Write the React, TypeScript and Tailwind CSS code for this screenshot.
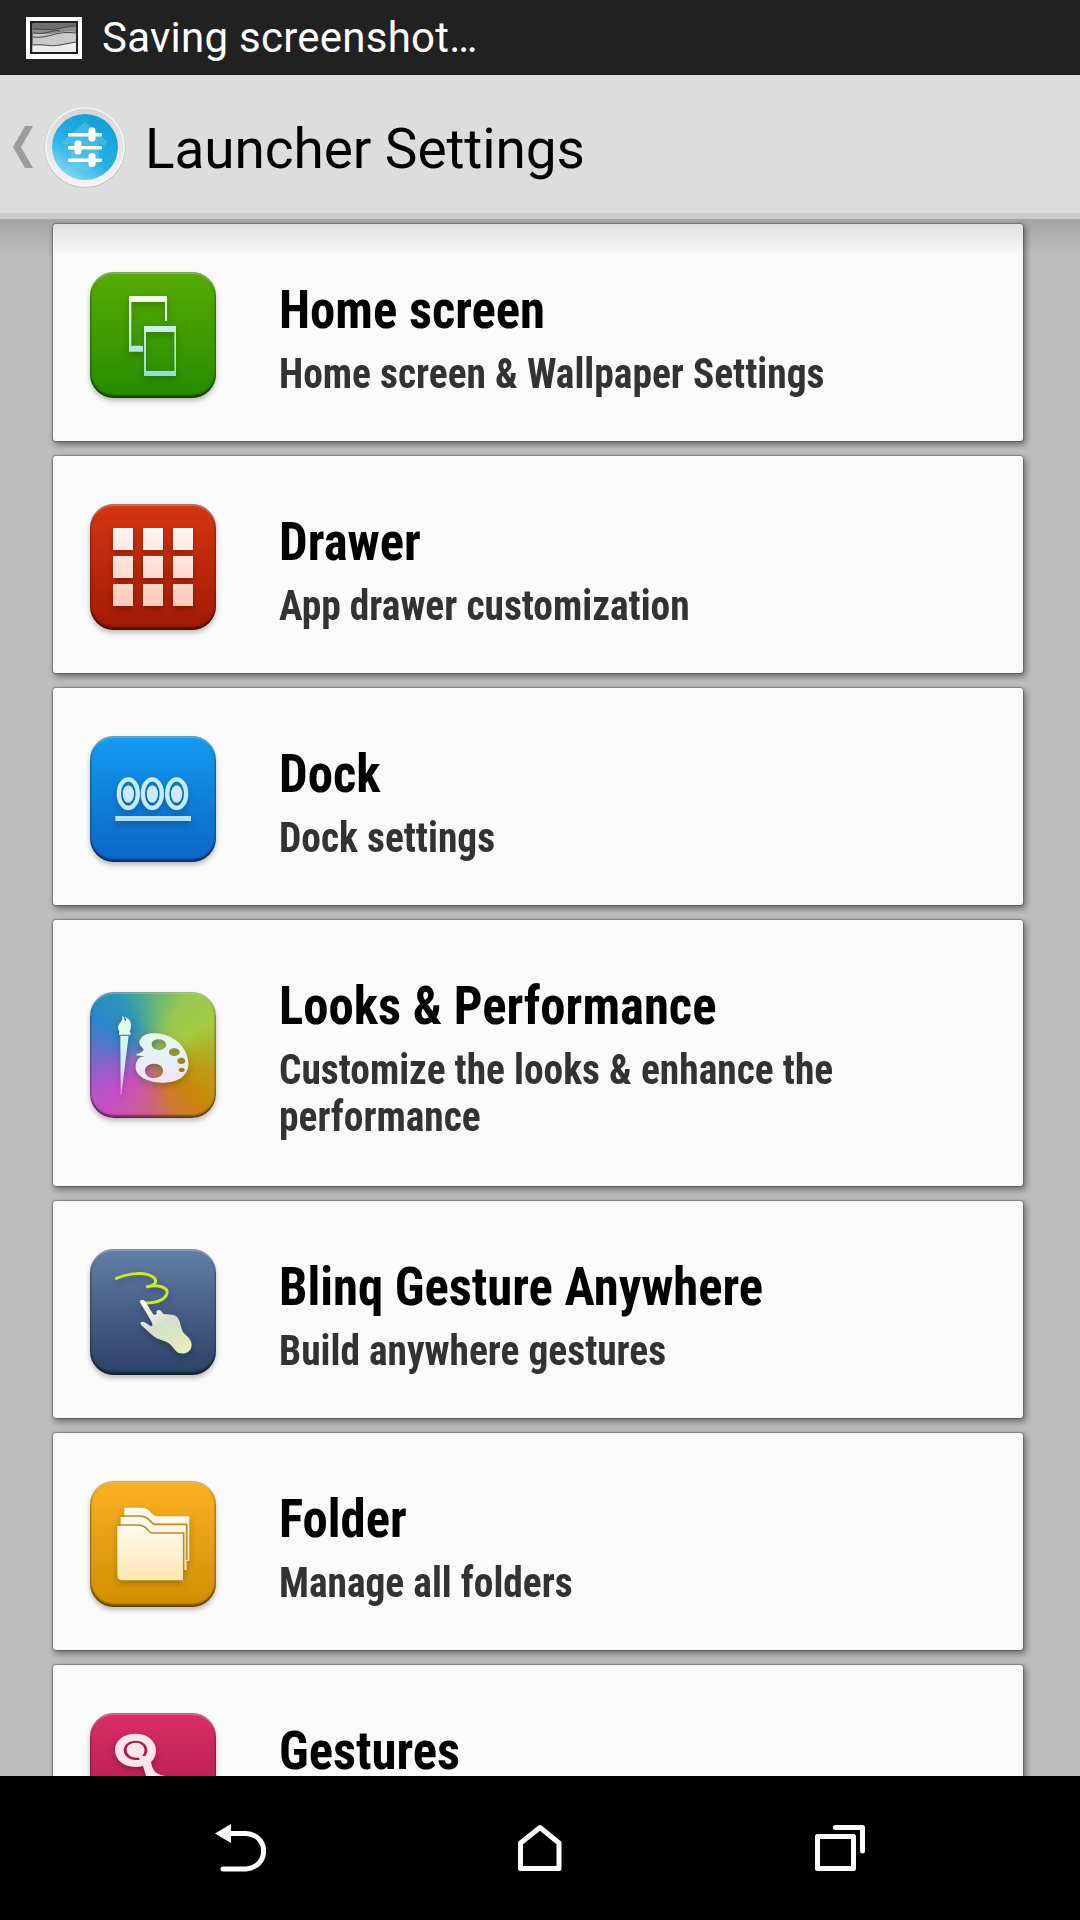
import React from "react";

const tile = "h-[126px] w-[126px] shrink-0 overflow-hidden rounded-[24px]";
const glyph = "h-full w-full drop-shadow-[0_3px_3px_rgba(0,0,0,0.25)]";

function HomeScreenIcon() {
  return (
    <svg viewBox="150 186 378 378" className={glyph}>
      <defs>
        <linearGradient id="hs" gradientUnits="userSpaceOnUse" x1="0" y1="258" x2="0" y2="500">
          <stop offset="0" stopColor="#f2ffe8" />
          <stop offset="1" stopColor="#8cdcd8" />
        </linearGradient>
      </defs>
      <path
        d="M267 258H381V333H375V276H274V407H309V425H267Z"
        fill="url(#hs)"
      />
      <path
        fillRule="evenodd"
        d="M312 348H408V498H312ZM318 366V483H403V366Z"
        fill="url(#hs)"
      />
    </svg>
  );
}

function DrawerIcon() {
  return (
    <svg viewBox="30 42 378 378" className={glyph}>
      <defs>
        <linearGradient id="dr" gradientUnits="userSpaceOnUse" x1="0" y1="114" x2="0" y2="348">
          <stop offset="0" stopColor="#fff4f4" />
          <stop offset="1" stopColor="#ffc9ba" />
        </linearGradient>
      </defs>
      {[114, 198, 282].map((y) =>
        [99, 189, 279].map((x) => (
          <rect key={`${x}-${y}`} x={x} y={y} width="60" height="66" fill="url(#dr)" />
        )),
      )}
    </svg>
  );
}

function DockIcon() {
  return (
    <svg viewBox="30 33 378 378" className={glyph}>
      {[145, 217, 290].map((x) => (
        <g key={x}>
          <ellipse cx={x} cy="206" rx="28.5" ry="43" fill="none" stroke="#c4ebfc" strokeWidth="13" />
          <ellipse cx={x} cy="207" rx="17" ry="26" fill="#cfe9fc" />
        </g>
      ))}
      <rect x="106" y="273" width="227" height="15" fill="#b5e0fb" />
    </svg>
  );
}

function LooksIcon() {
  return (
    <svg viewBox="30 36 378 378" className={glyph}>
      <defs>
        <linearGradient id="lk" x1="0" y1="0" x2="0" y2="1">
          <stop offset="0" stopColor="#e3fbe4" />
          <stop offset="0.6" stopColor="#e6eefb" />
          <stop offset="1" stopColor="#f8dff0" />
        </linearGradient>
        <linearGradient id="br" x1="0" y1="0" x2="0" y2="1">
          <stop offset="0" stopColor="#d2fbef" />
          <stop offset="0.6" stopColor="#cfe6fa" />
          <stop offset="1" stopColor="#e88fe0" />
        </linearGradient>
      </defs>
      <path
        d="M127 108C136 112 130 121 137 123C142 119 137 113 133 110C150 114 156 130 152 146C150 154 146 156 152 158V164H117V158C122 155 113 150 114 141C116 128 129 126 127 108Z"
        fill="#e2fdea"
      />
      <path d="M121 167H146L124 344H122Z" fill="url(#br)" />
      <path
        fillRule="evenodd"
        d="M178 184C184 165 204 158 228 160C275 162 320 196 325 245C329 285 296 310 246 308C203 306 169 290 167 263C166 242 178 229 194 229L167 226C177 216 187 218 191 209C186 199 177 197 178 184ZM215 193C215 202 224 210 236 210C248 210 258 203 258 194C258 185 249 178 237 178C225 178 215 184 215 193ZM267 216C267 223 274 228 283 228C292 228 299 223 299 216C299 210 292 205 283 205C274 205 267 210 267 216ZM292 242C292 248 297 252 304 252C311 252 316 248 316 242C316 237 311 233 304 233C297 233 292 237 292 242ZM296 269C296 273 300 276 305 276C311 276 314 273 314 269C314 266 311 263 305 263C300 263 296 266 296 269ZM195 272C195 284 206 294 221 294C238 294 249 285 249 273C249 260 238 251 222 251C206 251 195 260 195 272Z"
        fill="url(#lk)"
      />
    </svg>
  );
}

function GestureAnywhereIcon() {
  return (
    <svg viewBox="30 42 378 378" className={glyph}>
      <defs>
        <linearGradient id="hd" gradientUnits="userSpaceOnUse" x1="200" y1="195" x2="310" y2="355">
          <stop offset="0" stopColor="#ffffff" />
          <stop offset="0.45" stopColor="#d5dfcc" />
          <stop offset="1" stopColor="#e6edb8" />
        </linearGradient>
      </defs>
      <path
        d="M109 130C140 117 178 111 204 119C230 127 240 147 202 155C232 148 265 156 261 175C255 198 220 206 189 203"
        fill="none"
        stroke="#cbe926"
        strokeWidth="9"
        strokeLinecap="round"
        strokeLinejoin="round"
      />
      <path
        d="M180 202C179 194 191 193 196 200L221 240L231 237C225 228 235 221 243 227L250 237C263 239 278 238 288 243C302 253 301 280 311 294C322 305 334 312 335 329C335 348 319 358 301 355C286 353 279 332 264 323C249 315 231 314 216 300L186 272C176 262 186 257 194 262L213 274C221 273 216 263 213 257Z"
        fill="url(#hd)"
      />
    </svg>
  );
}

function FolderIcon() {
  return (
    <svg viewBox="30 33 378 378" className={glyph}>
      <defs>
        <linearGradient id="fd" x1="0" y1="0" x2="0" y2="1">
          <stop offset="0" stopColor="#fffaf0" />
          <stop offset="1" stopColor="#fde6b0" />
        </linearGradient>
      </defs>
      <g fill="url(#fd)">
        <path d="M133 113H185C213 114 214 137 229 139H328V272H319V300H133Z" />
        <path d="M122 140H180C211 142 210 162 224 165H319V300H122Z" />
        <path d="M112 167H175C204 169 203 188 215 190H309V331H127Q112 331 112 314Z" />
      </g>
      <path
        d="M122 138H180C211 140 210 160 224 163H320V270M112 165H175C204 167 203 186 215 189H311V300"
        fill="none"
        stroke="#b98a2c"
        strokeWidth="5"
      />
    </svg>
  );
}

function GesturesIcon() {
  return (
    <svg viewBox="150 219 378 378" className={glyph}>
      <path
        fillRule="evenodd"
        d="M225 330C225 301 252 281 287 281C322 281 348 303 348 331C348 346 342 358 333 366C337 389 345 403 372 407L410 440H330C322 420 314 395 309 378C263 389 225 366 225 330ZM251 330C251 347 267 360 287 360H298V353H288C273 353 260 343 260 330C260 317 273 308 287 308C302 308 313 318 313 330C313 337 311 342 307 347L315 349C320 344 322 338 322 330C322 314 307 302 287 302C267 302 251 314 251 330Z"
        fill="#fce4ef"
      />
      <ellipse cx="288" cy="330" rx="25" ry="20" fill="#fce4ef" />
    </svg>
  );
}

const items = [
  {
    title: "Home screen",
    text: "Home screen & Wallpaper Settings",
    icon: <HomeScreenIcon />,
    bg: "bg-linear-to-b from-[#56ab04] to-[#248c00]",
  },
  {
    title: "Drawer",
    text: "App drawer customization",
    icon: <DrawerIcon />,
    bg: "bg-linear-to-b from-[#d63511] to-[#a01a06]",
  },
  {
    title: "Dock",
    text: "Dock settings",
    icon: <DockIcon />,
    bg: "bg-linear-to-b from-[#149bf0] to-[#0d66c4]",
  },
  {
    title: "Looks & Performance",
    text: "Customize the looks & enhance the performance",
    icon: <LooksIcon />,
    bg: "bg-[radial-gradient(circle_at_50%_50%,#90908080_0%,transparent_40%),conic-gradient(from_0deg_at_50%_50%,#62b47c_0deg,#96c850_28deg,#a4cc42_60deg,#b4a820_92deg,#c88a08_130deg,#cf7a30_158deg,#cc6088_185deg,#c84fc4_222deg,#9c5ccc_252deg,#5a74c8_278deg,#2a86c8_305deg,#2f98b4_332deg,#62b47c_360deg)]",
    tall: true,
  },
  {
    title: "Blinq Gesture Anywhere",
    text: "Build anywhere gestures",
    icon: <GestureAnywhereIcon />,
    bg: "bg-linear-to-b from-[#647fa6] to-[#2c4166]",
  },
  {
    title: "Folder",
    text: "Manage all folders",
    icon: <FolderIcon />,
    bg: "bg-linear-to-b from-[#fbb022] to-[#d08f00]",
  },
  {
    title: "Gestures",
    icon: <GesturesIcon />,
    bg: "bg-linear-to-b from-[#d92e66] to-[#a81548]",
  },
];

function StatusBar() {
  return (
    <div className="flex h-[75px] shrink-0 items-center bg-[#212121] pl-[26px]">
      <svg viewBox="0 0 56 42" className="h-[42px] w-14">
        <path d="M0 0H56V42H0Z" fill="#fff" />
        <path d="M4 4H52V37H4Z" fill="#212121" />
        <path d="M6.500 6.500H50V35H6.500Z" fill="#c9c9c9" />
        <path d="M6.500 6.500H50V9C38 9 34 13 22 12.500L6.500 12Z" fill="#6e6e6e" />
        <path d="M6.500 12L22 12.500C34 13 38 9 50 9V15C36 13 28 18 18 17L6.500 16Z" fill="#8c8c8c" />
        <path d="M6.500 28C20 27 24 30 34 28L50 25V35H6.500Z" fill="#ededed" />
        <path
          d="M6.500 12L22 12.500C34 13 38 9 50 9M6.500 16C22 18 26 12 34 14M6.500 20C24 22 30 13 50 16M6.500 28C20 27 24 30 34 28L50 25"
          fill="none"
          stroke="#444"
          strokeWidth="1"
        />
      </svg>
      <span className="ml-5 text-[42px] leading-none tracking-[0.25px] whitespace-nowrap text-white">
        Saving screenshot…
      </span>
    </div>
  );
}

function Header() {
  return (
    <header className="flex h-36 shrink-0 items-center border-b-[6px] border-[#cbcbcb] bg-[#dddddd] pt-[5px]">
      <svg viewBox="0 0 22 42" className="ml-3 h-[42px] w-[22px]">
        <path d="M13 0H21L9 21L21 42H13L1 21Z" fill="#9c9c9c" />
      </svg>
      <svg viewBox="0 0 84 84" className="ml-[9px] h-[84px] w-[84px]">
        <defs>
          <linearGradient id="ring" x1="0" y1="0" x2="0" y2="1">
            <stop offset="0" stopColor="#d6d6d6" />
            <stop offset="1" stopColor="#f4f4f4" />
          </linearGradient>
          <linearGradient id="ball" x1="0.8" y1="0.1" x2="0.25" y2="1">
            <stop offset="0" stopColor="#12a0d8" />
            <stop offset="0.55" stopColor="#28b0e0" />
            <stop offset="1" stopColor="#84daf6" />
          </linearGradient>
        </defs>
        <circle cx="42" cy="42.5" r="40.5" fill="#c4c4c4" />
        <circle cx="42" cy="42" r="40" fill="#f6f6f6" />
        <circle cx="42" cy="42" r="38.5" fill="url(#ring)" />
        <circle cx="42" cy="42" r="33" fill="url(#ball)" />
        <path
          d="M42 17L65 37L61 41L56 37V58L42 67L28 58V37L23 41L19 37Z"
          fill="#7fd0ee"
          opacity="0.4"
        />
        <g fill="#fff">
          <rect x="25" y="28" width="34" height="3.5" rx="1" />
          <rect x="25" y="41" width="34" height="3.5" rx="1" />
          <rect x="25" y="53.5" width="34" height="3.5" rx="1" />
          <rect x="45.500" y="22.500" width="7" height="14" rx="3" />
          <rect x="31.500" y="35.500" width="7" height="14" rx="3" />
          <rect x="45.500" y="48" width="7" height="14" rx="3" />
        </g>
      </svg>
      <h1 className="ml-[18px] pt-[5px] text-[55px] leading-none tracking-[-0.1px] whitespace-nowrap text-black">
        Launcher Settings
      </h1>
    </header>
  );
}

function NavBar() {
  return (
    <nav className="flex h-36 shrink-0 items-center justify-between bg-black pr-[214px] pl-[214px]">
      <svg viewBox="0 0 52 48" className="h-12 w-[52px]">
        <path d="M1 9.500L17 0V19Z" fill="#fff" />
        <path
          d="M15 9.500H32C55.500 11 55.500 43 32 45H9"
          fill="none"
          stroke="#fff"
          strokeWidth="5"
          strokeLinecap="round"
        />
      </svg>
      <svg viewBox="0 0 46 48" className="h-12 w-[46px]">
        <path
          d="M3.500 19L23 3.500L42 19V44.500H3.500Z"
          fill="none"
          stroke="#fff"
          strokeWidth="5"
          strokeLinejoin="round"
        />
      </svg>
      <svg viewBox="0 0 52 48" className="h-12 w-[52px]">
        <path
          d="M3.500 12.500H39.500V44.500H3.500ZM21.500 3.500H48.500V27"
          fill="none"
          stroke="#fff"
          strokeWidth="5"
          strokeLinecap="round"
          strokeLinejoin="round"
        />
      </svg>
    </nav>
  );
}

export default function App() {
  return (
    <div className="flex h-[1920px] w-[1080px] flex-col overflow-hidden bg-[#bdbdbd] font-[Roboto,sans-serif]">
      <StatusBar />
      <Header />
      <main className="relative min-h-0 flex-1 overflow-hidden">
        <ul className="flex flex-col gap-[15px] pt-[5px] pr-[57px] pl-[53px]">
          {items.map((item) => (
            <li
              key={item.title}
              className={`flex shrink-0 items-center rounded-[3px] bg-[#fafafa] pl-[37px] shadow-[0_0_1px_1px_rgba(0,0,0,0.25),2px_3px_6px_1px_rgba(0,0,0,0.4)] ${
                item.tall ? "h-[266px] pb-px" : "h-[217px]"
              }`}
            >
              <div
                className={`mt-[5px] shadow-[inset_0_2px_1px_rgba(255,255,255,0.3),inset_0_-3px_2px_rgba(0,0,0,0.4),inset_0_0_2px_1px_rgba(0,0,0,0.3),0_3px_5px_rgba(0,0,0,0.25)] ${tile} ${item.bg}`}
              >
                {item.icon}
              </div>
              <div className="ml-[63px] w-[620px] origin-left scale-x-[0.939] self-start pt-[54px] font-['Roboto_Condensed',Roboto,sans-serif] font-bold">
                <h2 className="text-[54px] leading-[63px] text-black">{item.title}</h2>
                {item.text && (
                  <p className="mt-[9px] text-[42px] leading-[47px] text-[#323232]">{item.text}</p>
                )}
              </div>
            </li>
          ))}
        </ul>
        <div className="absolute inset-x-0 top-0 h-9 bg-linear-to-b from-black/13 to-transparent" />
      </main>
      <NavBar />
    </div>
  );
}
